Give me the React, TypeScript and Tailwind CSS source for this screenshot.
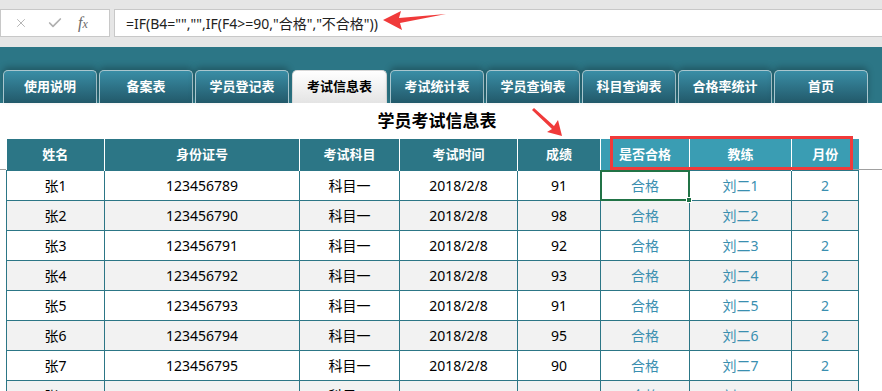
import { X, Check } from 'lucide-react'

const tabs = ['使用说明', '备案表', '学员登记表', '考试信息表', '考试统计表', '学员查询表', '科目查询表', '合格率统计', '首页']

const scores = [91, 98, 92, 93, 91, 95, 90, 92]

const rows = scores.map((score, i) => ({
    name: `张${i + 1}`,
    id: String(123456789 + i),
    subject: '科目一',
    date: '2018/2/8',
    score,
    pass: '合格',
    coach: `刘二${i + 1}`,
    month: 2,
}))

const font = { fontFamily: '"Noto Sans", "Noto Sans CJK SC", sans-serif' }

function App() {
    return (
        <div className="relative w-[882px] h-[391px] overflow-hidden bg-white" style={font}>
            {/* ========== FORMULA BAR ========== */}
            <div className="h-[47px] bg-[#e6e6e6] flex items-start pt-[9px] gap-[4px]">
                <div className="w-[110px] h-[28px] bg-white border border-[#c8c8c8] flex items-center text-[#b0b0b0]">
                    <X className="w-[14px] h-[14px] ml-[13px]" strokeWidth={1.6} />
                    <Check className="w-[16px] h-[16px] ml-[19px]" strokeWidth={2.6} />
                    <span className="ml-[15px] text-[16px] italic text-[#6a6a6a]" style={{ fontFamily: '"Liberation Serif", serif' }}>
                        f<span className="text-[12px]">x</span>
                    </span>
                </div>
                <div className="flex-1 h-[28px] bg-white border-y border-l border-[#c8c8c8] flex items-center pl-[11px] text-[14px] text-[#222]">
                    =IF(B4="","",IF(F4&gt;=90,"合格","不合格"))
                </div>
            </div>

            {/* ========== SHEET TABS ========== */}
            <div className="h-[56px] bg-[#2c7686] flex items-end pl-[3px] gap-[2px]">
                {tabs.map((t) =>
                    t === '考试信息表' ? (
                        <div
                            key={t}
                            className="w-[95px] h-[33px] ml-[1px] mr-[1px] rounded-t-[5px] border border-b-0 border-[#d8d8d8] bg-gradient-to-b from-white to-[#e4e4e4] flex items-center justify-center text-[13px] font-bold text-black"
                        >
                            {t}
                        </div>
                    ) : (
                        <div
                            key={t}
                            className="w-[94px] h-[33px] rounded-t-[5px] border border-b-0 border-[#a9c6ce] bg-gradient-to-b from-[#3a8ea6] to-[#22596a] flex items-center justify-center text-[13px] font-bold text-white shadow-[0_-3px_6px_rgba(0,0,0,0.25)]"
                        >
                            {t}
                        </div>
                    )
                )}
            </div>

            {/* ========== TABLE ========== */}
            <div className="h-[36px] flex items-center justify-center text-[17px] font-bold text-black pr-[8px]">
                学员考试信息表
            </div>
            <table className="ml-[6px] border-collapse table-fixed w-[852px]">
                <colgroup>
                    <col className="w-[98px]" />
                    <col className="w-[195px]" />
                    <col className="w-[100px]" />
                    <col className="w-[118px]" />
                    <col className="w-[83px]" />
                    <col className="w-[89px]" />
                    <col className="w-[102px]" />
                    <col className="w-[67px]" />
                </colgroup>
                <thead>
                    <tr className="h-[31px] text-[13px] font-bold text-white">
                        <th className="bg-[#2c7686] border-r border-white">姓名</th>
                        <th className="bg-[#2c7686] border-r border-white">身份证号</th>
                        <th className="bg-[#2c7686] border-r border-white">考试科目</th>
                        <th className="bg-[#2c7686] border-r border-white">考试时间</th>
                        <th className="bg-[#2c7686] border-r border-white">成绩</th>
                        <th className="bg-[#3a9db3] border-r border-white">是否合格</th>
                        <th className="bg-[#3a9db3] border-r border-white">教练</th>
                        <th className="bg-[#3a9db3]">月份</th>
                    </tr>
                </thead>
                <tbody>
                    {rows.map((r, i) => (
                        <tr key={r.name} className={`h-[30px] text-[14px] text-center ${i % 2 ? 'bg-[#f2f2f2]' : 'bg-white'}`}>
                            <td className="border border-[#2c7686] text-black">{r.name}</td>
                            <td className="border border-[#2c7686] text-black">{r.id}</td>
                            <td className="border border-[#2c7686] text-black">{r.subject}</td>
                            <td className="border border-[#2c7686] text-black">{r.date}</td>
                            <td className="border border-[#2c7686] text-black">{r.score}</td>
                            <td className="border border-[#2c7686] text-[#3a8fb0] relative">
                                {r.pass}
                                {i === 0 && (
                                    <div className="absolute inset-[-1px] border-2 border-[#217346]">
                                        <div className="absolute right-[-4px] bottom-[-4px] w-[6px] h-[6px] bg-[#217346] border border-white" />
                                    </div>
                                )}
                            </td>
                            <td className="border border-[#2c7686] text-[#3a8fb0]">{r.coach}</td>
                            <td className="border border-[#2c7686] text-[#3a8fb0]">{r.month}</td>
                        </tr>
                    ))}
                </tbody>
            </table>

            {/* annotations */}
            <div className="absolute left-[610px] top-[136px] w-[243px] h-[34px] border-[3px] border-[#f03a3a]" />
            <div className="absolute left-[853px] top-[169px] w-[29px] h-px bg-[#a0a0a0]" />
            <div className="absolute left-0 top-[169px] w-[6px] h-px bg-[#a0a0a0]" />
            <svg className="absolute left-[380px] top-[8px]" width="70" height="24" viewBox="0 0 70 24">
                <polygon points="3,12 21,3 19,10 66,6 20,15 22,22" fill="#f03a3a" />
            </svg>
            <svg className="absolute left-[530px] top-[104px]" width="36" height="34" viewBox="0 0 36 34">
                <polygon points="4,4 24,22 28,16 32,32 17,28 22,25 2,6" fill="#f03a3a" />
            </svg>
        </div>
    )
}

export default App
